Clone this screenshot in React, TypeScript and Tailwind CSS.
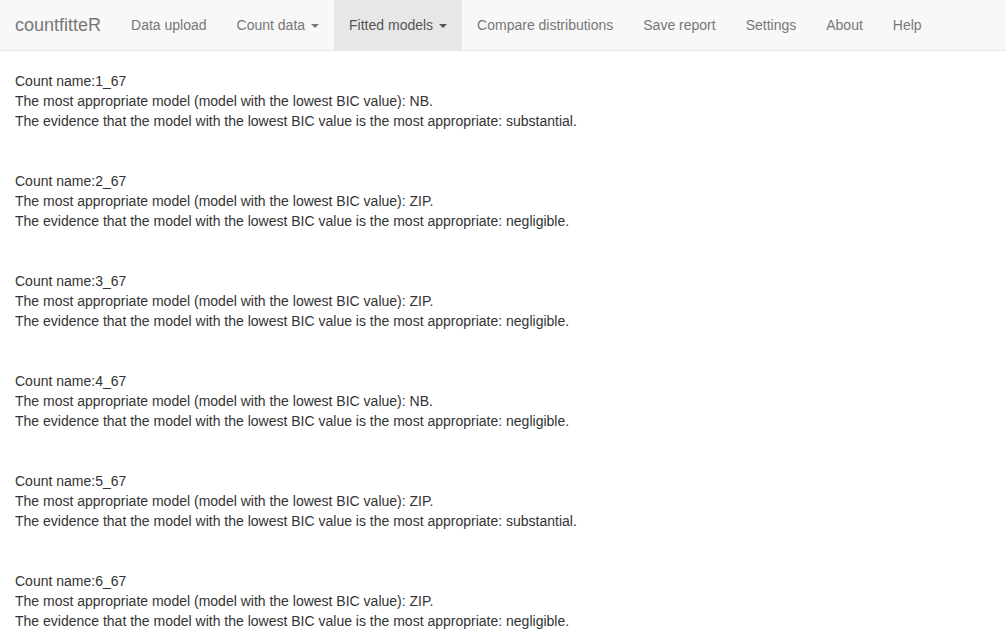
const navItems = [
  { label: "Data upload" },
  { label: "Count data", dropdown: true },
  { label: "Fitted models", dropdown: true, active: true },
  { label: "Compare distributions" },
  { label: "Save report" },
  { label: "Settings" },
  { label: "About" },
  { label: "Help" },
]

const results = [
  { name: "1_67", model: "NB", evidence: "substantial" },
  { name: "2_67", model: "ZIP", evidence: "negligible" },
  { name: "3_67", model: "ZIP", evidence: "negligible" },
  { name: "4_67", model: "NB", evidence: "negligible" },
  { name: "5_67", model: "ZIP", evidence: "substantial" },
  { name: "6_67", model: "ZIP", evidence: "negligible" },
]

function Caret() {
  return (
    <span className="ml-[6px] inline-block h-0 w-0 border-x-[4px] border-t-[4px] border-x-transparent border-t-current align-middle" />
  )
}

function App() {
  return (
    <div className="min-h-screen bg-white text-[14px] leading-[20px] text-[#333]" style={{ fontFamily: '"Liberation Sans", Arial, sans-serif' }}>
      <nav className="flex h-[51px] border-b border-[#e7e7e7] bg-[#f8f8f8]">
        <a className="h-[50px] px-[15px] py-[15px] text-[18px] leading-[20px] text-[#777]">countfitteR</a>
        <ul className="flex">
          {navItems.map((item) => (
            <li key={item.label}>
              <a
                className={
                  item.active
                    ? "block h-[50px] bg-[#e7e7e7] px-[15px] py-[15px] text-[#555]"
                    : "block h-[50px] px-[15px] py-[15px] text-[#777]"
                }
              >
                {item.label}
                {item.dropdown && <Caret />}
              </a>
            </li>
          ))}
        </ul>
      </nav>
      <main className="px-[15px] pt-[20px]">
        {results.map((r) => (
          <div key={r.name} className="mb-[40px]">
            <div>Count name:{r.name}</div>
            <div>The most appropriate model (model with the lowest BIC value): {r.model}.</div>
            <div>The evidence that the model with the lowest BIC value is the most appropriate: {r.evidence}.</div>
          </div>
        ))}
      </main>
    </div>
  )
}

export default App
